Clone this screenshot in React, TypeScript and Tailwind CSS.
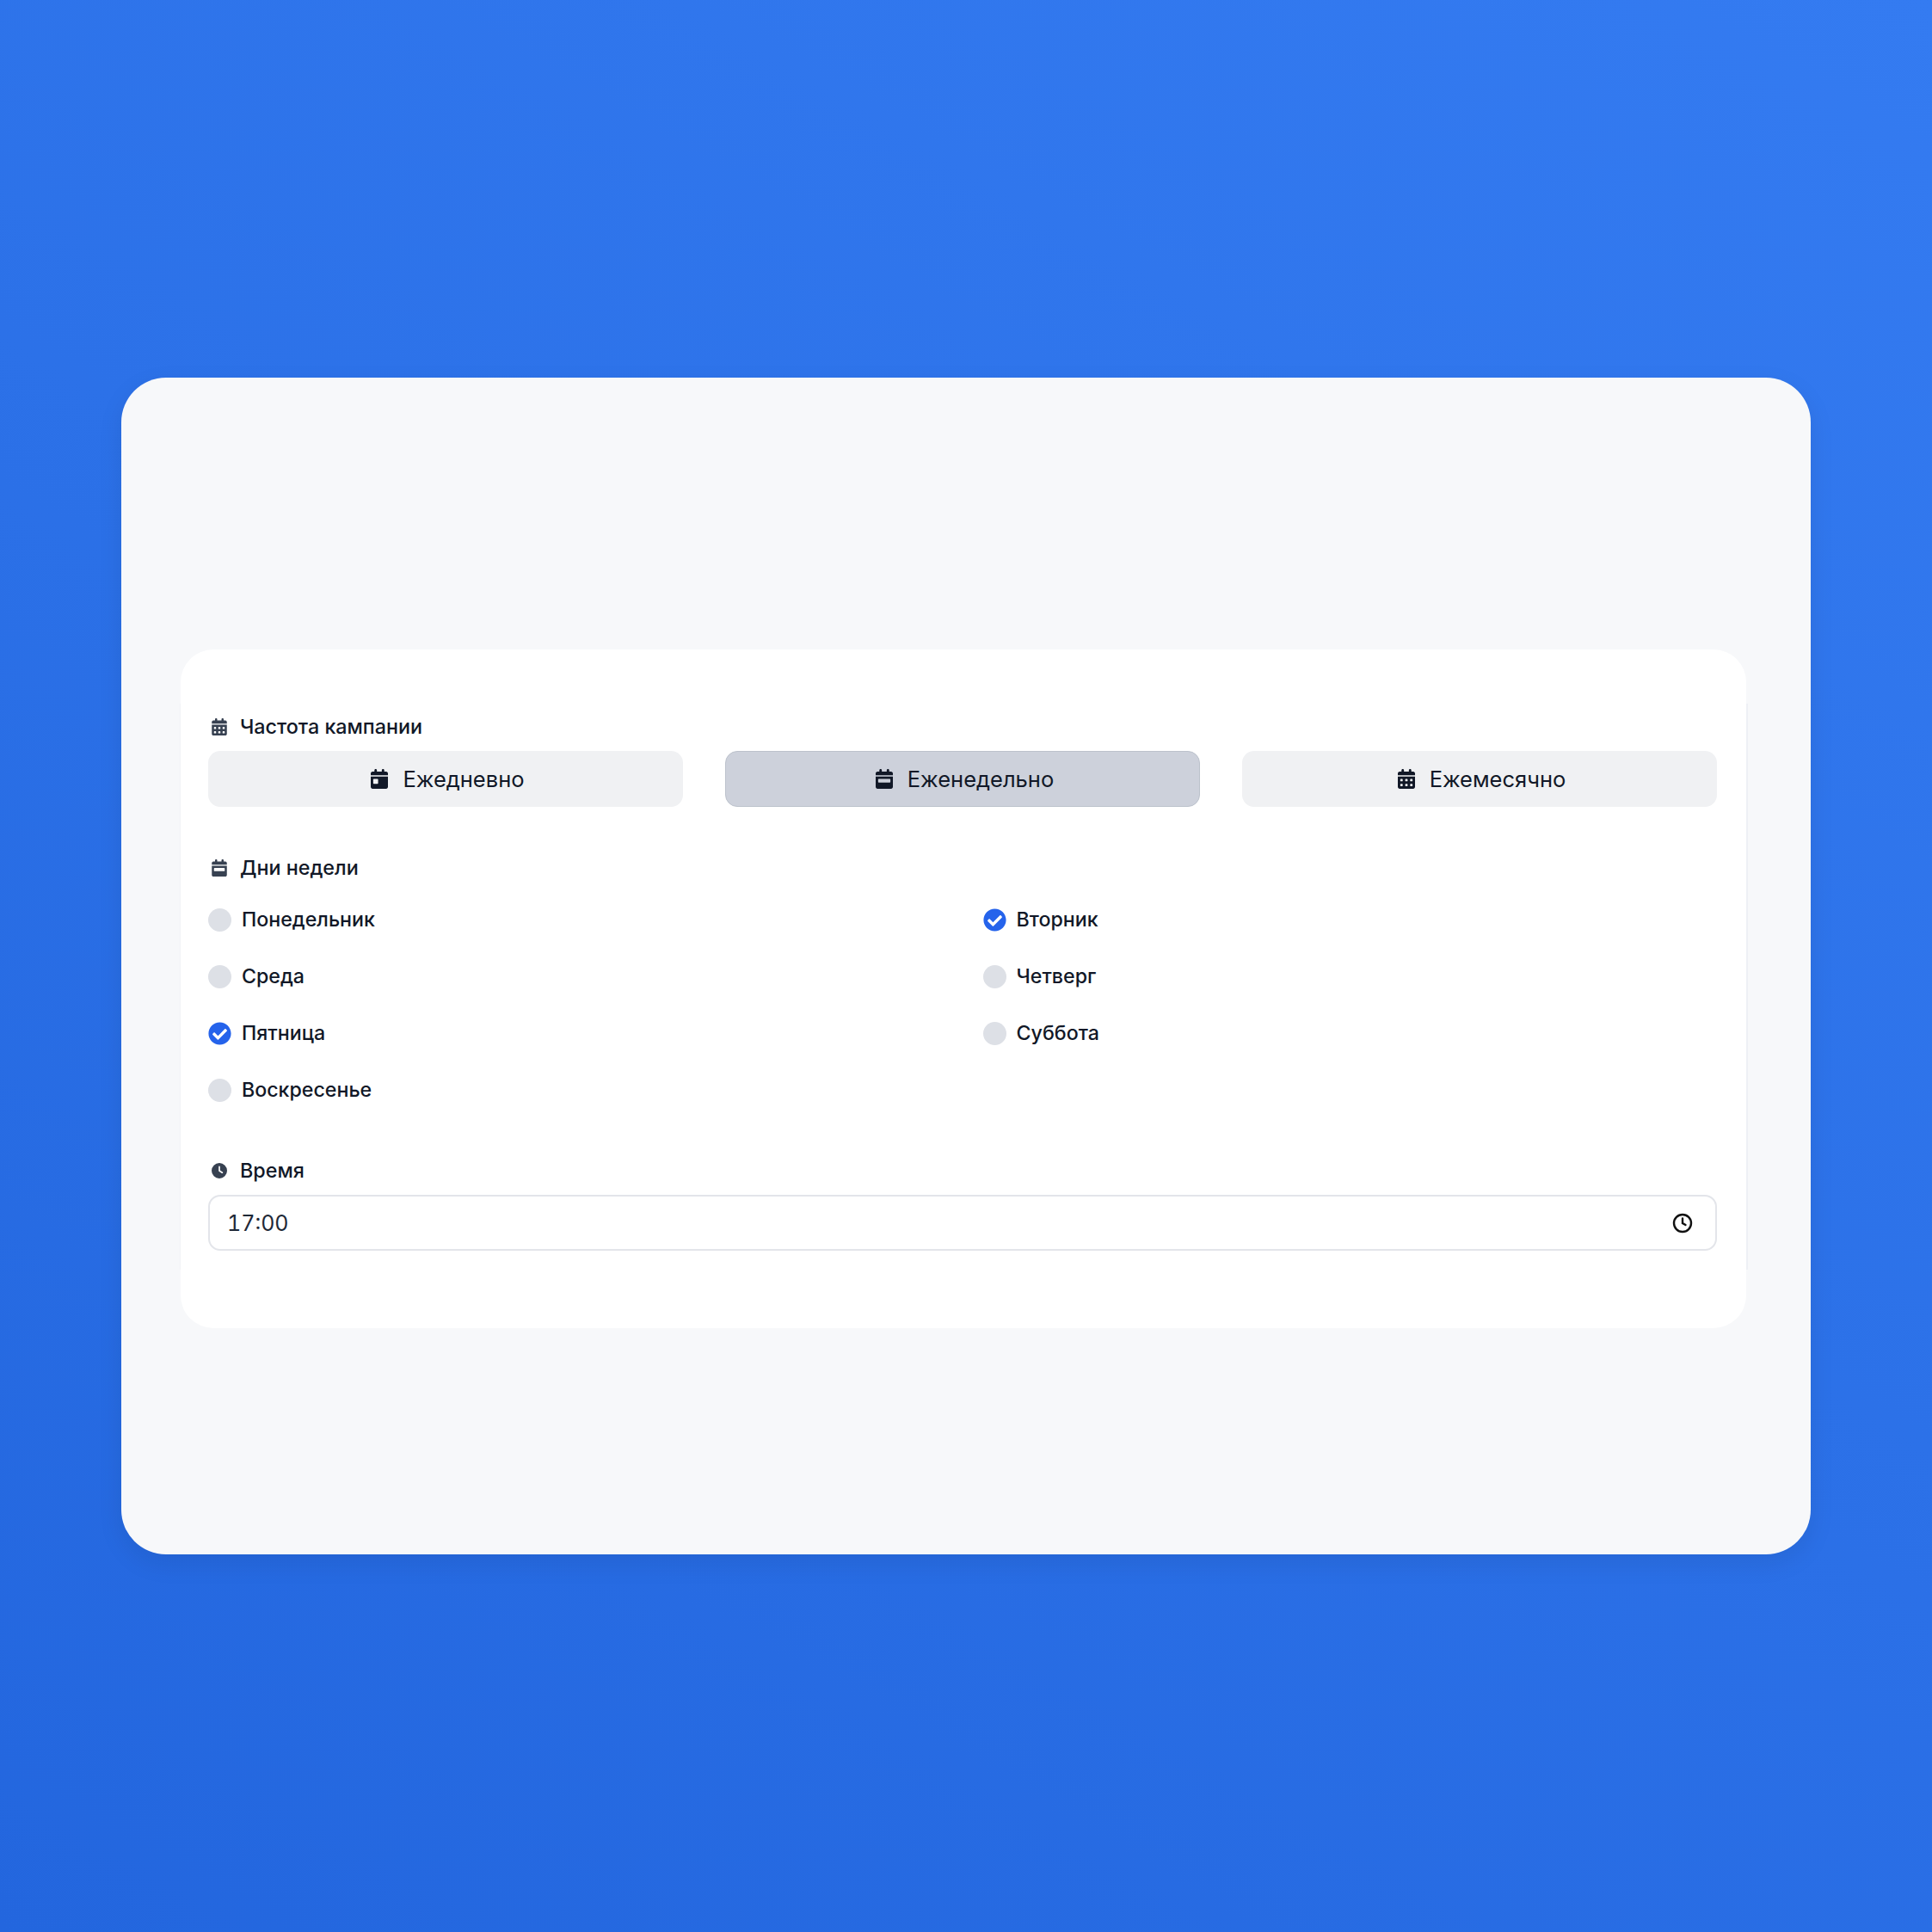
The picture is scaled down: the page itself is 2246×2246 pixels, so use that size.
import React from "react";
import { FaCalendarDay, FaCalendarDays, FaCalendarWeek, FaClock } from "react-icons/fa6";
import { FaCheckCircle } from "react-icons/fa";

type Day = { name: string; checked: boolean };

const days: Day[] = [
  { name: "Понедельник", checked: false },
  { name: "Вторник", checked: true },
  { name: "Среда", checked: false },
  { name: "Четверг", checked: false },
  { name: "Пятница", checked: true },
  { name: "Суббота", checked: false },
  { name: "Воскресенье", checked: false },
];

const frequencies = [
  { name: "Ежедневно", icon: FaCalendarDay, active: false },
  { name: "Еженедельно", icon: FaCalendarWeek, active: true },
  { name: "Ежемесячно", icon: FaCalendarDays, active: false },
];

const SectionLabel = ({ icon: Icon, text }: { icon: React.ElementType; text: string }) => (
  <div className="flex h-[28px] items-center gap-[15px] pl-[4px] text-[23.3px] font-medium text-[#111827]">
    <Icon className="w-[18px] h-[20px] text-[#374151]" />
    <span>{text}</span>
  </div>
);

const App = () => {
  return (
    <div className="flex h-[2246px] w-[2246px] items-center justify-center bg-[linear-gradient(30deg,#2366de,#347bf1)] font-['Inter',sans-serif]">
      <div className="h-[1368px] w-[1964px] rounded-[52px] bg-[#f7f8fa] pl-[69px] pr-[75px] pt-[316px] shadow-[0_10px_30px_rgba(0,0,0,0.08)]">
        <div className="relative h-[789px] rounded-[38px] bg-white pl-[32px] pr-[34px] pt-[76px]">
          {/* faint edge lines beside the white panel */}
          <span className="absolute -left-[1px] top-[63px] bottom-[68px] w-[1px] bg-[#f2f3f6]" />
          <span className="absolute -right-[2px] top-[63px] bottom-[68px] w-[2px] bg-[#eef0f5]" />

          <SectionLabel icon={FaCalendarDays} text="Частота кампании" />
          <div className="mt-[14px] grid grid-cols-3 gap-[49px]">
            {frequencies.map(({ name, icon: Icon, active }) => (
              <button
                key={name}
                className={`flex h-[65px] items-center justify-center gap-[17px] rounded-[14px] border pl-[5px] text-[25.5px] text-[#111827] ${active ? "border-[#bcc2cc] bg-[#cdd1db]" : "border-transparent bg-[#f0f1f3]"}`}
              >
                <Icon className="w-[20px] h-[23px]" />
                <span className="pt-[2px]">{name}</span>
              </button>
            ))}
          </div>

          <div className="mt-[57px]">
            <SectionLabel icon={FaCalendarWeek} text="Дни недели" />
          </div>
          <div className="mt-[32px] grid grid-cols-2 gap-x-[47px] gap-y-[38px]">
            {days.map((day) => (
              <label key={day.name} className="flex h-[28px] items-center gap-[12px] text-[23.2px] font-medium text-[#111827]">
                {day.checked ? (
                  <FaCheckCircle className="h-[27px] w-[27px] text-[#2563eb]" />
                ) : (
                  <span className="h-[27px] w-[27px] rounded-full bg-[#dde0e6]" />
                )}
                <span>{day.name}</span>
              </label>
            ))}
          </div>

          <div className="mt-[66px]">
            <SectionLabel icon={FaClock} text="Время" />
          </div>
          <div className="mt-[14px] flex h-[65px] items-center rounded-[14px] border-2 border-[#e3e5ea] pl-[20px] pr-[26px]">
            <input
              readOnly
              value="17:00"
              className="min-w-0 flex-1 pt-[2px] text-[25px] tabular-nums text-[#1f2937] outline-none"
            />
            <svg viewBox="0 0 24 24" className="h-[24px] w-[24px]" fill="none" stroke="#111" strokeWidth="2.4" strokeLinecap="round">
              <circle cx="12" cy="12" r="10" />
              <path d="M12 6.5V12l3.5 2" />
            </svg>
          </div>
        </div>
      </div>
    </div>
  );
};

export default App;
